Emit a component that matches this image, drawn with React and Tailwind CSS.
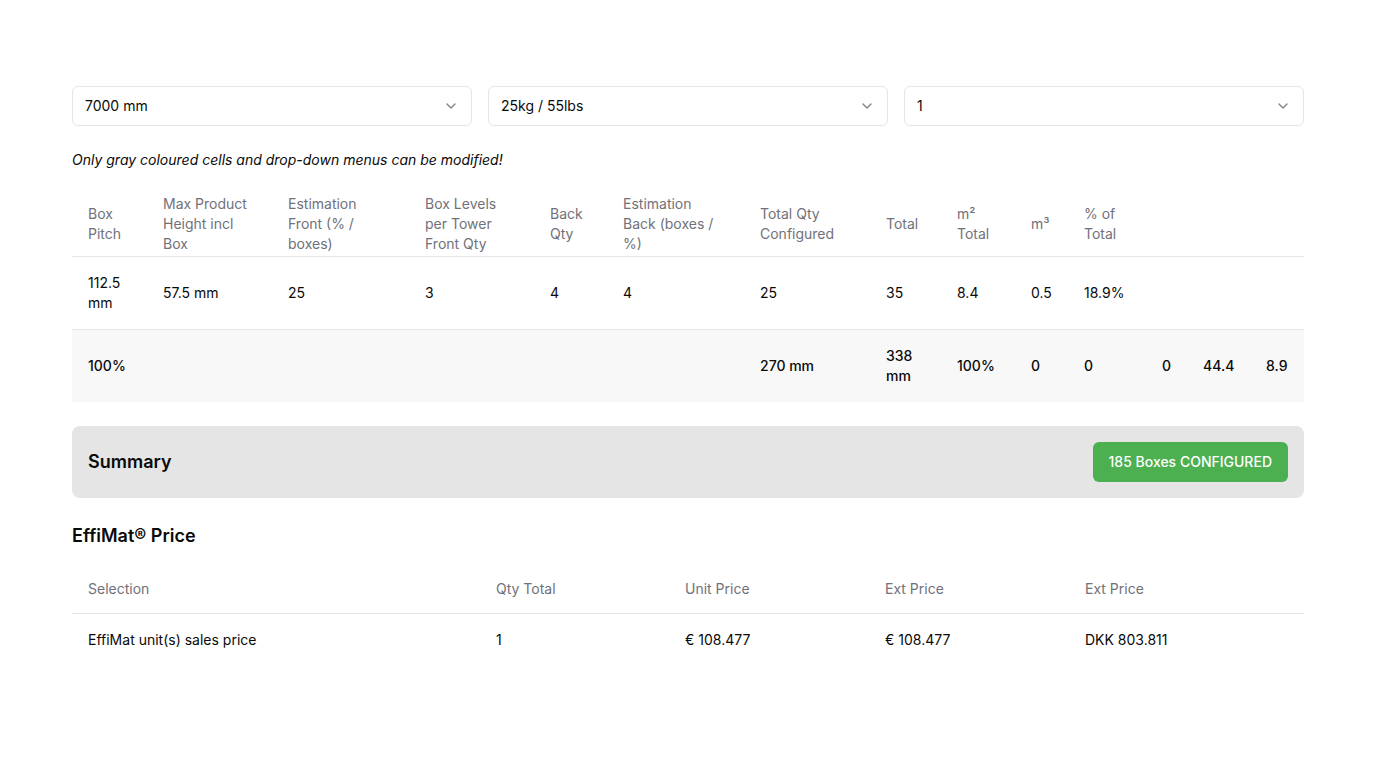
import React from "react";
import { ChevronDown } from "lucide-react";

function Select({ value }) {
  return (
    <div className="flex h-10 items-center justify-between rounded-md border border-[#e5e5e5] bg-white pl-3 pr-3 text-sm text-[#0a0a0a]">
      <span>{value}</span>
      <ChevronDown className="h-4 w-4 text-[#0a0a0a] opacity-50" strokeWidth={2} />
    </div>
  );
}

const headers = [
  "Box Pitch",
  "Max Product Height incl Box",
  "Estimation Front (% / boxes)",
  "Box Levels per Tower Front Qty",
  "Back Qty",
  "Estimation Back (boxes / %)",
  "Total Qty Configured",
  "Total",
  "m² Total",
  "m³",
  "% of Total",
  "",
  "",
  "",
];

const widths = [
  "w-[75px]",
  "w-[125px]",
  "w-[137px]",
  "w-[125px]",
  "w-[73px]",
  "w-[137px]",
  "w-[126px]",
  "w-[71px]",
  "w-[74px]",
  "w-[53px]",
  "w-[78px]",
  "w-[41px]",
  "w-[63px]",
  "w-[54px]",
];

const bodyRow = ["112.5 mm", "57.5 mm", "25", "3", "4", "4", "25", "35", "8.4", "0.5", "18.9%", "", "", ""];
const footRow = ["100%", "", "", "", "", "", "270 mm", "338 mm", "100%", "0", "0", "0", "44.4", "8.9"];

export default function App() {
  return (
    <div
      className="min-h-screen bg-white text-[#0a0a0a]"
      style={{ fontFamily: "Inter, 'Noto Sans', sans-serif" }}
    >
      <div className="mx-[72px] pt-[86px]">
        <div className="grid grid-cols-3 gap-4">
          <Select value="7000 mm" />
          <Select value="25kg / 55lbs" />
          <Select value="1" />
        </div>

        <p className="mt-6 text-sm italic text-[#0a0a0a]">
          Only gray coloured cells and drop-down menus can be modified!
        </p>

        <table className="mt-6 w-full table-fixed border-collapse text-sm">
          <colgroup>
            {widths.map((w, i) => (
              <col key={i} className={w} />
            ))}
          </colgroup>
          <thead>
            <tr className="border-b border-[#e5e5e5]">
              {headers.map((h, i) => (
                <th
                  key={i}
                  className="h-12 px-4 pb-[2px] text-left align-middle font-normal text-[#71717a]"
                >
                  {h}
                </th>
              ))}
            </tr>
          </thead>
          <tbody>
            <tr className="border-b border-[#e5e5e5]">
              {bodyRow.map((c, i) => (
                <td key={i} className="p-4 align-middle">
                  {c}
                </td>
              ))}
            </tr>
            <tr className="bg-[#f8f8f8]">
              {footRow.map((c, i) => (
                <td key={i} className="p-4 align-middle font-medium">
                  {c}
                </td>
              ))}
            </tr>
          </tbody>
        </table>

        <div className="mt-6 flex items-center justify-between rounded-lg bg-[#e5e5e5] p-4">
          <h2 className="text-lg font-semibold">Summary</h2>
          <button className="h-10 rounded-md bg-[#4caf50] px-4 text-sm font-medium text-white">
            185 Boxes CONFIGURED
          </button>
        </div>

        <h2 className="mt-6 text-lg font-semibold">EffiMat® Price</h2>

        <table className="mt-[15px] w-full table-fixed border-collapse text-sm">
          <colgroup>
            <col className="w-[408px]" />
            <col className="w-[189px]" />
            <col className="w-[200px]" />
            <col className="w-[200px]" />
            <col className="w-[235px]" />
          </colgroup>
          <thead>
            <tr className="border-b border-[#e5e5e5]">
              {["Selection", "Qty Total", "Unit Price", "Ext Price", "Ext Price"].map((h, i) => (
                <th key={i} className="h-12 px-4 text-left align-middle font-normal text-[#71717a]">
                  {h}
                </th>
              ))}
            </tr>
          </thead>
          <tbody>
            <tr>
              {["EffiMat unit(s) sales price", "1", "€ 108.477", "€ 108.477", "DKK 803.811"].map((c, i) => (
                <td key={i} className="p-4 align-middle">
                  {c}
                </td>
              ))}
            </tr>
          </tbody>
        </table>
      </div>
    </div>
  );
}
